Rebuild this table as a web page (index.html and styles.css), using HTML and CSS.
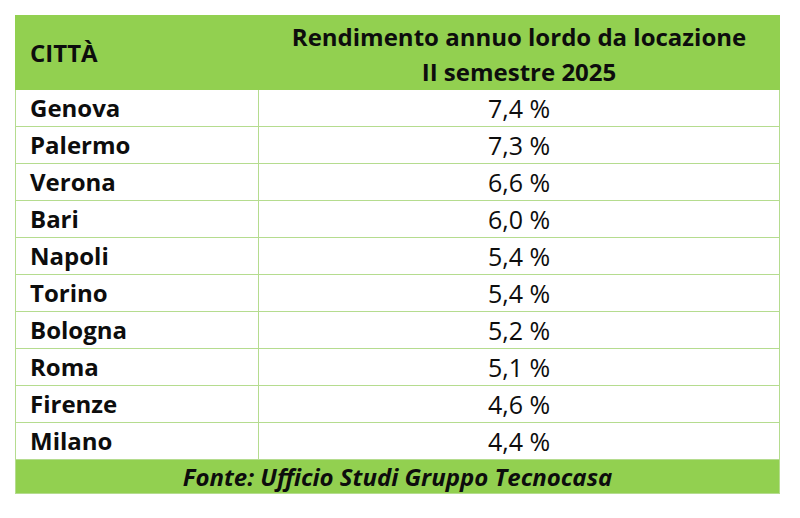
FILE: index.html
```html
<!DOCTYPE html>
<html lang="it">
<head>
<meta charset="utf-8">
<link rel="stylesheet" href="styles.css">
</head>
<body>
<table class="tbl">
  <thead>
    <tr class="head">
      <th class="c1">CITTÀ</th>
      <th class="c2">Rendimento annuo lordo da locazione<br>II semestre 2025</th>
    </tr>
  </thead>
  <tbody>
    <tr><td class="city">Genova</td><td class="val">7,4 %</td></tr>
    <tr><td class="city">Palermo</td><td class="val">7,3 %</td></tr>
    <tr><td class="city">Verona</td><td class="val">6,6 %</td></tr>
    <tr><td class="city">Bari</td><td class="val">6,0 %</td></tr>
    <tr><td class="city">Napoli</td><td class="val">5,4 %</td></tr>
    <tr><td class="city">Torino</td><td class="val">5,4 %</td></tr>
    <tr><td class="city">Bologna</td><td class="val">5,2 %</td></tr>
    <tr><td class="city">Roma</td><td class="val">5,1 %</td></tr>
    <tr><td class="city">Firenze</td><td class="val">4,6 %</td></tr>
    <tr><td class="city">Milano</td><td class="val">4,4 %</td></tr>
  </tbody>
  <tfoot>
    <tr class="foot"><td colspan="2">Fonte: Ufficio Studi Gruppo Tecnocasa</td></tr>
  </tfoot>
</table>
</body>
</html>
```
FILE: styles.css
```css
html, body {
  margin: 0;
  padding: 0;
  background: #ffffff;
}
body {
  padding: 15px 0 0 15px;
  font-family: "Open Sans", "Liberation Sans", sans-serif;
  color: #0d0d0d;
}
.tbl {
  border-collapse: collapse;
  width: 765px;
  table-layout: fixed;
}
.tbl th, .tbl td {
  padding: 0;
  border: 1px solid #b5dc8f;
  line-height: 1;
}
.head {
  height: 73px;
}
.head th {
  background: #92d050;
  font-weight: 700;
  font-size: 24px;
  border-color: #92d050;
}
.head .c1 {
  width: 228px;
  text-align: left;
  padding-left: 14px;
}
.head .c2 {
  text-align: center;
  line-height: 35px;
  padding-top: 3px;
}
tbody tr {
  height: 37px;
}
.city {
  font-weight: 700;
  font-size: 24px;
  padding-left: 14px !important;
}
.val {
  text-align: center;
  font-size: 25px;
}
.foot {
  height: 34px;
}
.foot td {
  background: #92d050;
  text-align: center;
  font-weight: 700;
  font-style: italic;
  font-size: 24px;
}
```
